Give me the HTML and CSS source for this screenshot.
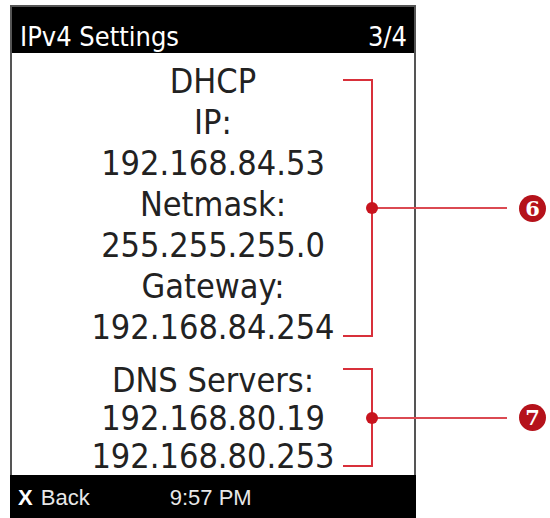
FILE: index.html
```html
<!DOCTYPE html>
<html lang="en">
<head>
    <meta charset="UTF-8">
    <meta name="viewport" content="width=device-width, initial-scale=1.0">
    <title>IPv4 Settings</title>
    <link rel="stylesheet" href="styles.css">
</head>
<body>
    <div class="page">
        <div class="device">
            <header class="titlebar">
                <span>IPv4 Settings</span>
                <span>3/4</span>
            </header>
            <main class="screen">
                <div class="group">
                    <p>DHCP</p>
                    <p>IP:</p>
                    <p>192.168.84.53</p>
                    <p>Netmask:</p>
                    <p>255.255.255.0</p>
                    <p>Gateway:</p>
                    <p>192.168.84.254</p>
                </div>
                <div class="group group-dns">
                    <p>DNS Servers:</p>
                    <p>192.168.80.19</p>
                    <p>192.168.80.253</p>
                </div>
            </main>
            <footer class="softkeys">
                <span class="key"><b>X</b> Back</span>
                <span class="clock">9:57 PM</span>
            </footer>
        </div>

        <!-- callouts sit over the screen edge -->
        <div class="callout callout-ip">
            <div class="bracket"><i class="dot"></i></div>
            <div class="stem"></div>
            <span class="badge">6</span>
        </div>
        <div class="callout callout-dns">
            <div class="bracket"><i class="dot"></i></div>
            <div class="stem"></div>
            <span class="badge">7</span>
        </div>
    </div>
</body>
</html>
```

FILE: styles.css
```css
html {
    background: #fff;
}
body {
    margin: 0;
    overflow: hidden;
}
.page {
    position: relative;
    width: 550px;
    height: 518px;
    overflow: hidden;
}
.device {
    box-sizing: border-box;
    width: 406px;
    margin: 5px 0 0 10px;
    border: 2px solid #555;
    border-bottom: none;
    background: #fff;
}
.titlebar {
    display: flex;
    justify-content: space-between;
    align-items: flex-end;
    height: 46px;
    box-sizing: border-box;
    padding: 0 7px 3px 8px;
    background: #000;
    color: #fff;
    font-family: "DejaVu Sans Condensed", "DejaVu Sans", sans-serif;
    font-size: 27px;
    line-height: 1;
}
.screen {
    display: flex;
    flex-direction: column;
    gap: 13px;
    height: 422px;
    box-sizing: border-box;
    padding-top: 8px;
    font-family: "DejaVu Sans Condensed", "DejaVu Sans", sans-serif;
    font-size: 34px;
    line-height: 41px;
    color: #222;
    text-align: center;
}
.group p {
    margin: 0;
}
.group-dns {
    line-height: 38px;
}
.softkeys {
    display: flex;
    align-items: center;
    gap: 80px;
    height: 46px;
    padding-left: 8px;
    margin: 0 -2px;
    background: #000;
    color: #e8e8e8;
    font-family: "Liberation Sans", Arial, sans-serif;
    font-size: 22px;
}
.key b {
    color: #fff;
    margin-right: 2px;
}

.callout {
    position: absolute;
    left: 343px;
    display: flex;
    align-items: center;
}
.callout-ip {
    top: 79px;
    height: 258px;
}
.callout-dns {
    top: 368px;
    height: 99px;
}
.bracket {
    position: relative;
    box-sizing: border-box;
    width: 30px;
    height: 100%;
    border: 2px solid #d8303a;
    border-left: none;
}
.dot {
    position: absolute;
    right: -7px;
    top: 50%;
    width: 12px;
    height: 12px;
    margin-top: -6px;
    border-radius: 50%;
    background: #c8141e;
}
.stem {
    width: 134px;
    height: 2px;
    background: #db4a52;
}
.badge {
    display: grid;
    place-items: center;
    width: 27px;
    height: 27px;
    margin-left: 12px;
    border-radius: 50%;
    background: #b5121b;
    color: #fff;
    font-family: "DejaVu Serif", "Liberation Serif", serif;
    font-weight: 700;
    font-size: 21px;
    line-height: 1;
}
```
